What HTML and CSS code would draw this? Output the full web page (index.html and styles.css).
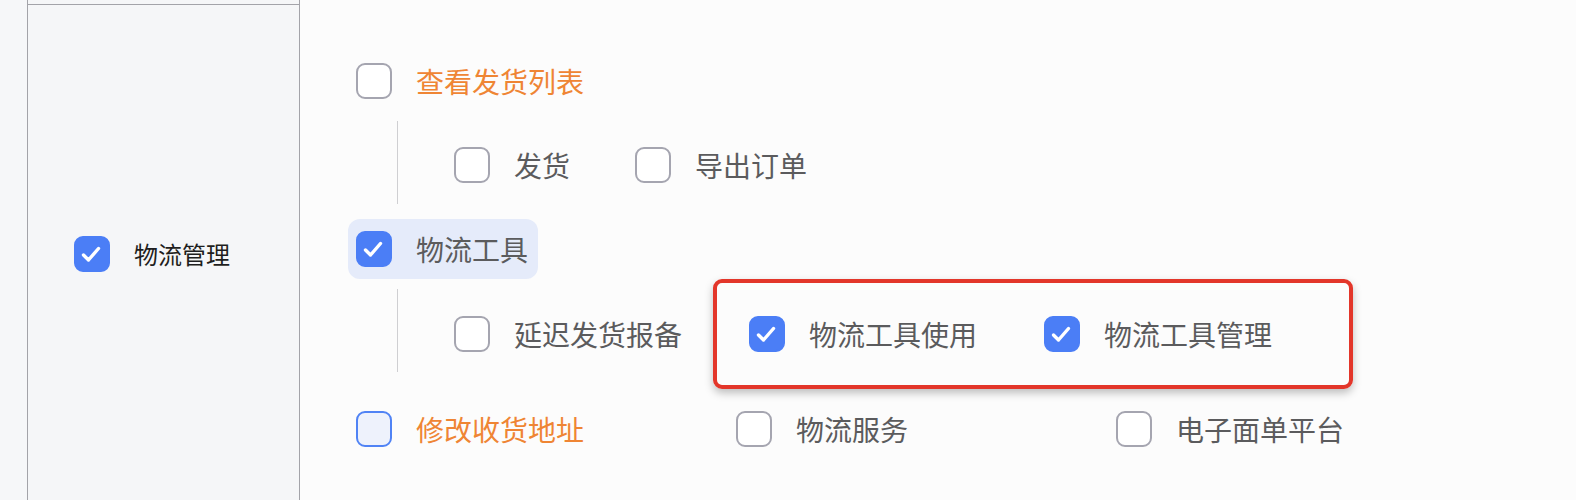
FILE: index.html
```html
<!DOCTYPE html>
<html lang="zh-CN">
  <head>
    <meta charset="UTF-8" />
    <meta name="viewport" content="width=device-width, initial-scale=1.0" />
    <title>权限设置</title>
    <link rel="stylesheet" href="styles.css">
  </head>
  <body>
    <div class="tabla">
      <div class="fila fila-prev">
        <div class="celda-izq"></div>
        <div class="celda-der"></div>
      </div>
      <div class="fila fila-main">
        <div class="celda-izq">
          <label class="item">
            <span class="check on"><svg viewBox="2 2 32 32"><polyline points="9.5,19 14.5,24 24.5,12.5" /></svg></span>
            <span class="texto oscuro">物流管理</span>
          </label>
        </div>
        <div class="celda-der">
          <div class="grupo">
            <div class="nodo">
              <span class="check"></span>
              <span class="texto naranja">查看发货列表</span>
            </div>
            <div class="hijos">
              <div class="nodo">
                <span class="check"></span>
                <span class="texto">发货</span>
              </div>
              <div class="nodo">
                <span class="check"></span>
                <span class="texto">导出订单</span>
              </div>
            </div>
          </div>
          <div class="grupo grupo-2">
            <div class="nodo activo">
              <span class="check on"><svg viewBox="2 2 32 32"><polyline points="9.5,19 14.5,24 24.5,12.5" /></svg></span>
              <span class="texto">物流工具</span>
            </div>
            <div class="hijos">
              <div class="nodo">
                <span class="check"></span>
                <span class="texto">延迟发货报备</span>
              </div>
              <div class="nodo">
                <span class="check on"><svg viewBox="2 2 32 32"><polyline points="9.5,19 14.5,24 24.5,12.5" /></svg></span>
                <span class="texto">物流工具使用</span>
              </div>
              <div class="nodo">
                <span class="check on"><svg viewBox="2 2 32 32"><polyline points="9.5,19 14.5,24 24.5,12.5" /></svg></span>
                <span class="texto">物流工具管理</span>
              </div>
            </div>
          </div>
          <div class="hojas">
            <div class="nodo">
              <span class="check hover"></span>
              <span class="texto naranja">修改收货地址</span>
            </div>
            <div class="nodo">
              <span class="check"></span>
              <span class="texto">物流服务</span>
            </div>
            <div class="nodo">
              <span class="check"></span>
              <span class="texto">电子面单平台</span>
            </div>
          </div>
        </div>
      </div>
    </div>
    <!-- marca roja -->
    <div class="marca"></div>
  </body>
</html>
```

FILE: styles.css
```css
* {
  margin: 0;
  padding: 0;
  box-sizing: border-box;
  font-family: "Noto Sans CJK SC", "Noto Sans", sans-serif;
}

body {
  width: 1576px;
  height: 500px;
  overflow: hidden;
  background-color: #f6f7f9;
}

.tabla {
  margin-left: 27px;
}

.fila {
  display: flex;
}

.fila-prev {
  height: 5px;
  border-bottom: 1px solid #a3a3a9;
}

.fila-main {
  height: 497px;
}

.celda-izq {
  width: 273px;
  flex-shrink: 0;
  border-left: 1px solid #a3a3a9;
  border-right: 1px solid #a3a3a9;
  background-color: #f5f6f8;
  display: flex;
  align-items: center;
  padding-left: 46px;
}

.celda-der {
  flex: 1;
  background-color: #fcfcfc;
  padding: 46px 0 0 48px;
}

.item {
  display: flex;
  align-items: center;
  gap: 24px;
}

.check {
  width: 36px;
  height: 36px;
  flex-shrink: 0;
  border: 2px solid #a5a5b0;
  border-radius: 9px;
  background-color: #fff;
  display: flex;
}

.check.on {
  border-color: #4b7ef6;
  background-color: #4b7ef6;
}

.check.hover {
  border-color: #5083f5;
  background-color: #eef2fc;
}

.check svg {
  width: 100%;
  height: 100%;
}

.check svg polyline {
  fill: none;
  stroke: #fff;
  stroke-width: 3.4;
  stroke-linecap: round;
  stroke-linejoin: round;
}

.texto {
  font-size: 28px;
  line-height: 1;
  color: #5b5b5d;
  white-space: nowrap;
}

.texto.naranja {
  color: #ef8534;
}

.texto.oscuro {
  font-size: 24px;
  color: #1e1e20;
}

.nodo {
  height: 60px;
  display: inline-flex;
  align-items: center;
  gap: 24px;
  padding: 0 10px 0 8px;
  border-radius: 12px;
}

.nodo.activo {
  background-color: #e5ebfa;
}

.grupo {
  display: flex;
  flex-direction: column;
  align-items: flex-start;
}

.grupo-2 {
  margin-top: 15px;
}

.hijos {
  margin: 10px 0 0 49px;
  height: 83px;
  border-left: 1px solid #cfcfd2;
  padding: 14px 0 0 48px;
  display: flex;
  align-items: flex-start;
  gap: 47px;
}

.grupo-2 .hijos {
  padding-top: 15px;
  gap: 49px;
}

.hojas {
  margin-top: 27px;
  display: grid;
  grid-template-columns: repeat(3, 380px);
}

.marca {
  position: absolute;
  left: 713px;
  top: 279px;
  width: 640px;
  height: 110px;
  border: 4px solid #e3362a;
  border-radius: 9px;
  box-shadow: 0 4px 8px rgba(0, 0, 0, 0.25);
}
```
